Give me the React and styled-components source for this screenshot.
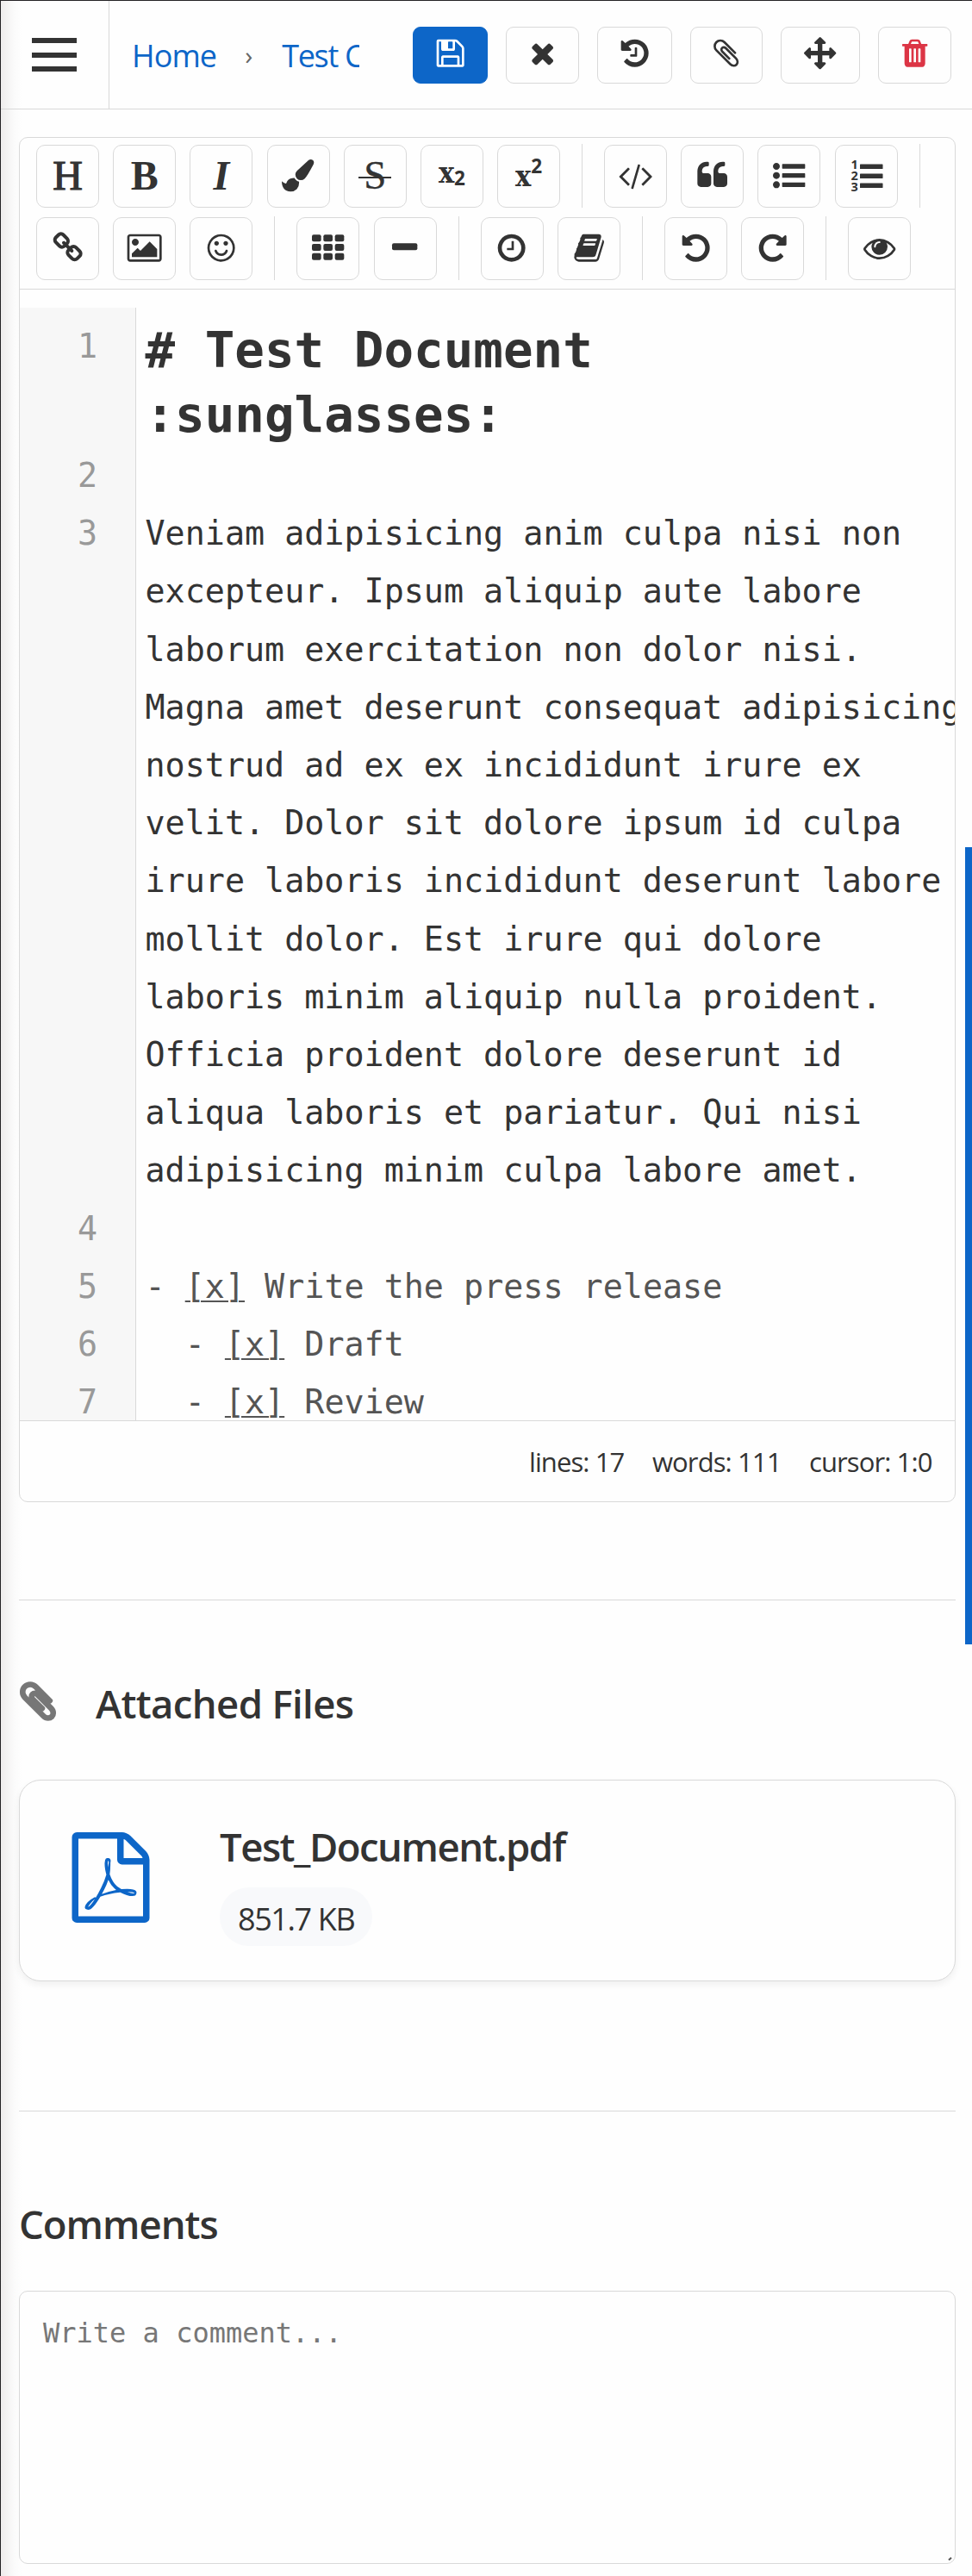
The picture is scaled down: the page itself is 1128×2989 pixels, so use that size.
import React from 'react';
import styled, { createGlobalStyle } from 'styled-components';

const GlobalStyle = createGlobalStyle`
  *, *::before, *::after { box-sizing: border-box; }
  html, body { margin: 0; background: #fefefe; }
  body { font-family: "Open Sans", "Noto Sans", sans-serif; color: #333; overflow: hidden; }
`;

const line = '#d9d9d9';
const blue = '#0d66c8';
const ink = '#333333';
const mono = '"DejaVu Sans Mono", "Liberation Mono", monospace';

const Page = styled.div`
  position: relative;
  width: 1128px;
  height: 2989px;
  overflow: hidden;
  background: linear-gradient(to right, #eeecec 0, #f5f4f4 8px, #fbfbfb 16px, #fefefe 24px);
  border-top: 1px solid #252326;
  border-left: 1px solid #252326;
`;

const Header = styled.header`
  display: flex;
  height: 126px;
  border-bottom: 1px solid ${line};
`;

const MenuButton = styled.button`
  display: flex;
  flex-direction: column;
  justify-content: space-between;
  width: 126px;
  height: 125px;
  padding: 43px 37px 43px 36px;
  border: 0;
  border-right: 1px solid ${line};
  background: none;
`;

const MenuBar = styled.span`
  height: 6px;
  background: ${ink};
`;

const Breadcrumbs = styled.nav`
  display: flex;
  align-items: center;
  width: 290px;
  padding: 2px 0 0 26px;
  overflow: hidden;
  white-space: nowrap;
  font-size: 36px;
`;

const Crumb = styled.a`
  flex: none;
  color: ${blue};
  letter-spacing: ${(p) => p.$track}px;
`;

const CrumbArrow = styled.span`
  flex: none;
  width: 76px;
  padding: 0 0 2px 33px;
  color: #666;
  font-size: 30px;
`;

const Actions = styled.div`
  display: flex;
  gap: 21px;
  padding: 30px 0 0 62px;
`;

const ActionButton = styled.button`
  display: flex;
  justify-content: center;
  width: ${(p) => p.$width}px;
  height: 66px;
  padding: 11px 0 0;
  border: 1px solid ${(p) => (p.$primary ? blue : line)};
  border-radius: 9px;
  background: ${(p) => (p.$primary ? blue : '#fefefe')};
  color: ${(p) => (p.$primary ? '#fff' : p.$danger ? '#dc3545' : ink)};
`;

const Icon = styled.svg`
  display: block;
  flex: none;
  fill: currentColor;
  overflow: visible;
`;

const Main = styled.main`
  padding: 32px 19px 0 21px;
`;

const Editor = styled.section`
  height: 1584px;
  border: 1px solid ${line};
  border-radius: 10px;
  overflow: hidden;
  background: #fefefe;
`;

const Toolbar = styled.div`
  display: flex;
  flex-direction: column;
  gap: 11px;
  height: 176px;
  padding: 8px 0 0 19px;
  border-bottom: 1px solid ${line};
`;

const ToolRow = styled.div`
  display: flex;
`;

const ToolButton = styled.button`
  display: flex;
  align-items: center;
  justify-content: center;
  width: 73px;
  height: 73px;
  margin-right: 16.2px;
  padding: 0 0 2px;
  border: 1px solid ${line};
  border-radius: 10px;
  background: #fefefe;
  color: ${ink};
`;

const ToolDivider = styled.span`
  width: 1px;
  height: 74px;
  margin: -1px 25px 0 8.8px;
  background: ${line};
`;

const Glyph = styled.span`
  font-family: "Liberation Serif", serif;
  font-size: ${(p) => p.$size || 48}px;
  line-height: 1;
  font-weight: ${(p) => p.$weight || 700};
  font-style: ${(p) => (p.$italic ? 'italic' : 'normal')};
  -webkit-text-stroke: ${(p) => p.$stroke || 0}px ${ink};
`;

const Struck = styled(Glyph)`
  position: relative;
  &::after {
    content: '';
    position: absolute;
    left: -6px;
    right: -6px;
    top: 25px;
    height: 2px;
    background: ${ink};
  }
`;

const ScriptGlyph = styled.span`
  display: flex;
  font: 700 34px/36px "DejaVu Serif Condensed", "DejaVu Serif", serif;
`;

const ScriptDigit = styled.span`
  font: 700 22.5px/36px "Open Sans", sans-serif;
  margin-top: ${(p) => (p.$raised ? '-11px' : '7px')};
`;

const CodeArea = styled.div`
  display: grid;
  grid-template-columns: 135px 1fr;
  height: 1312px;
  padding-top: 21px;
  overflow: hidden;
  font: 38.36px/67.2px ${mono};
`;

const Gutter = styled.div`
  padding: 11px 44px 0 0;
  border-right: 1px solid ${line};
  background: #f7f7f7;
  color: #999;
  text-align: right;
`;

const LineNumber = styled.div`
  height: ${(p) => p.$height}px;
`;

const Code = styled.div`
  padding: 10px 0 0 10.5px;
  overflow: hidden;
  white-space: pre;
`;

const CodeHeading = styled.div`
  height: 151px;
  padding-top: 2px;
  font-size: 57.5px;
  font-weight: 700;
  line-height: 75px;
`;

const CodeLine = styled.div`
  height: 67.2px;
  color: ${(p) => (p.$muted ? '#555' : ink)};
`;

const Check = styled.span`
  text-decoration: underline;
  text-decoration-thickness: 2px;
  text-underline-offset: 3px;
`;

const StatusBar = styled.div`
  display: flex;
  justify-content: flex-end;
  gap: 33px;
  height: 96px;
  padding: 25px 27px 0 0;
  border-top: 1px solid ${line};
  font-size: 31px;
  line-height: 44px;
`;

const StatusItem = styled.span`
  width: ${(p) => p.$width}px;
  white-space: nowrap;
  letter-spacing: -0.9px;
`;

const Rule = styled.hr`
  height: 1px;
  margin: ${(p) => p.$top}px 0 0;
  border: 0;
  background: ${line};
`;

const SectionHeading = styled.h2`
  display: flex;
  margin: 0;
  height: 64px;
  font-size: 45.5px;
  font-weight: 600;
  line-height: 64px;
  white-space: nowrap;
  letter-spacing: ${(p) => p.$track}px;
`;

const FileName = styled(SectionHeading)`
  height: 56px;
  line-height: 49px;
`;

const ClipSlot = styled.span`
  width: 92px;
  margin-left: -3px;
  padding: 5px 0 0 0;
  color: #777;
`;

const FileCard = styled.article`
  display: flex;
  height: 234px;
  padding: 52px 0 0 53px;
  border: 1px solid ${line};
  border-radius: 25px;
  background: #fefefe;
  box-shadow: 0 4px 9px rgba(0, 0, 0, 0.06);
`;

const FileIcon = styled.div`
  padding-top: 8px;
  color: ${blue};
`;

const FileInfo = styled.div`
  padding: 0 0 0 74px;
`;

const SizeBadge = styled.span`
  display: block;
  width: 177px;
  height: 68px;
  margin-top: 16px;
  padding-left: 21px;
  border-radius: 34px;
  background: #f8f9fb;
  font-size: 36px;
  line-height: 73px;
  white-space: nowrap;
  letter-spacing: -1.4px;
`;

const CommentBox = styled.div`
  position: relative;
  height: 317px;
  padding: 26px 27px;
  border: 1px solid ${line};
  border-radius: 10px;
  background: #fefefe;
  color: #777;
  font: 32px/44px ${mono};
`;

const Resizer = styled.svg`
  position: absolute;
  right: 3px;
  bottom: 3px;
`;

const AttachSection = styled.section`
  padding-top: 87px;
`;
const CardSlot = styled.div`
  padding-top: 57px;
`;
const CommentSection = styled.section`
  padding-top: 98px;
`;
const CommentSlot = styled.div`
  padding-top: 46px;
`;

const paths = {
  save: 'M512 1536h768v-384h-768v384zm896 0h128v-896q0-14-10-38.5t-20-34.5l-281-281q-10-10-34-20t-39-10v416q0 40-28 68t-68 28h-576q-40 0-68-28t-28-68v-416h-128v1280h128v-416q0-40 28-68t68-28h832q40 0 68 28t28 68v416zm-384-928v-320q0-13-9.5-22.5t-22.5-9.5h-192q-13 0-22.5 9.5t-9.5 22.5v320q0 13 9.5 22.5t22.5 9.5h192q13 0 22.5-9.5t9.5-22.5zm640 32v928q0 40-28 68t-68 28h-1344q-40 0-68-28t-28-68v-1344q0-40 28-68t68-28h928q40 0 88 20t76 48l280 280q28 28 48 76t20 88z',
  close: 'M1490 1322q0 40-28 68l-136 136q-28 28-68 28t-68-28l-294-294-294 294q-28 28-68 28t-68-28l-136-136q-28-28-28-68t28-68l294-294-294-294q-28-28-28-68t28-68l136-136q28-28 68-28t68 28l294 294 294-294q28-28 68-28t68 28l136 136q28 28 28 68t-28 68l-294 294 294 294q28 28 28 68z',
  history: 'M1664 896q0 156-61 298t-164 245-245 164-298 61q-172 0-327-72.5t-264-204.5q-7-10-6.5-22.5t8.5-20.5l137-138q10-9 25-9 16 2 23 12 73 95 179 147t225 52q104 0 198.5-40.5t163.5-109.5 109.5-163.5 40.5-198.5-40.5-198.5-109.5-163.5-163.5-109.5-198.5-40.5q-98 0-188 35.5t-160 101.5l137 138q31 30 14 69-17 40-59 40h-448q-26 0-45-19t-19-45v-448q0-42 40-59 39-17 69 14l130 129q107-101 244.5-156.5t284.5-55.5q156 0 298 61t245 164 164 245 61 298zm-640-288v448q0 14-9 23t-23 9h-320q-14 0-23-9t-9-23v-64q0-14 9-23t23-9h224v-352q0-14 9-23t23-9h64q14 0 23 9t9 23z',
  undo: 'M1664 896q0 156-61 298t-164 245-245 164-298 61q-172 0-327-72.5t-264-204.5q-7-10-6.5-22.5t8.5-20.5l137-138q10-9 25-9 16 2 23 12 73 95 179 147t225 52q104 0 198.5-40.5t163.5-109.5 109.5-163.5 40.5-198.5-40.5-198.5-109.5-163.5-163.5-109.5-198.5-40.5q-98 0-188 35.5t-160 101.5l137 138q31 30 14 69-17 40-59 40h-448q-26 0-45-19t-19-45v-448q0-42 40-59 39-17 69 14l130 129q107-101 244.5-156.5t284.5-55.5q156 0 298 61t245 164 164 245 61 298z',
  clip: 'M1596 1385q0 117-79 196t-196 79q-135 0-235-100l-777-776q-113-115-113-271 0-159 110-270t269-111q158 0 273 113l605 606q10 10 10 22 0 16-30.5 46.5t-46.5 30.5q-13 0-23-10l-606-607q-79-77-181-77-106 0-179 75t-73 181q0 105 76 181l776 777q63 63 145 63 64 0 106-42t42-106q0-82-63-145l-581-581q-26-24-60-24-29 0-48 19t-19 48q0 32 25 59l410 410q10 10 10 22 0 16-31 47t-47 31q-12 0-22-10l-410-410q-63-61-63-149 0-82 57-139t139-57q88 0 149 63l581 581q100 98 100 235z',
  move: 'M1792 896q0 26-19 45l-256 256q-19 19-45 19t-45-19-19-45v-128h-384v384h128q26 0 45 19t19 45-19 45l-256 256q-19 19-45 19t-45-19l-256-256q-19-19-19-45t19-45 45-19h128v-384h-384v128q0 26-19 45t-45 19-45-19l-256-256q-19-19-19-45t19-45l256-256q19-19 45-19t45 19 19 45v128h384v-384h-128q-26 0-45-19t-19-45 19-45l256-256q19-19 45-19t45 19l256 256q19 19 19 45t-19 45-45 19h-128v384h384v-128q0-26 19-45t45-19 45 19l256 256q19 19 19 45z',
  trash: 'M704 1376v-704q0-14-9-23t-23-9h-64q-14 0-23 9t-9 23v704q0 14 9 23t23 9h64q14 0 23-9t9-23zm256 0v-704q0-14-9-23t-23-9h-64q-14 0-23 9t-9 23v704q0 14 9 23t23 9h64q14 0 23-9t9-23zm256 0v-704q0-14-9-23t-23-9h-64q-14 0-23 9t-9 23v704q0 14 9 23t23 9h64q14 0 23-9t9-23zm-544-992h448l-48-117q-7-9-17-11h-317q-10 2-17 11zm928 32v64q0 14-9 23t-23 9h-96v948q0 83-47 143.5t-113 60.5h-832q-66 0-113-58.5t-47-141.5v-952h-96q-14 0-23-9t-9-23v-64q0-14 9-23t23-9h309l70-167q15-37 54-63t79-26h320q40 0 79 26t54 63l70 167h309q14 0 23 9t9 23z',
  brush: 'M1615 0q70 0 122.5 46.5t52.5 116.5q0 63-45 151-332 629-465 752-97 91-218 91-126 0-216.5-92.5t-90.5-219.5q0-128 92-212l638-579q59-54 130-54zm-909 1034q39 76 106.5 130t150.5 76l1 71q4 213-129.5 347t-348.5 134q-123 0-218-46.5t-152.5-127.5-86.5-183-29-220q7 5 41 30t62 44.5 59 36.5 46 17q41 0 55-37 25-66 57.5-112.5t69.5-76 88-47.5 103-25.5 125-10.5z',
  code: 'M553 1399l-50 50q-10 10-23 10t-23-10l-466-466q-10-10-10-23t10-23l466-466q10-10 23-10t23 10l50 50q10 10 10 23t-10 23l-393 393 393 393q10 10 10 23t-10 23zm591-1067l-373 1291q-4 13-15.5 19.5t-23.5 2.5l-62-17q-13-4-19.5-15.5t-2.5-24.5l373-1291q4-13 15.5-19.5t23.5-2.5l62 17q13 4 19.5 15.5t2.5 24.5zm657 651l-466 466q-10 10-23 10t-23-10l-50-50q-10-10-10-23t10-23l393-393-393-393q-10-10-10-23t10-23l50-50q10-10 23-10t23 10l466 466q10 10 10 23t-10 23z',
  quote: 'M832 960v384q0 80-56 136t-136 56h-384q-80 0-136-56t-56-136v-704q0-104 40.5-198.5t109.5-163.5 163.5-109.5 198.5-40.5h64q26 0 45 19t19 45v128q0 26-19 45t-45 19h-64q-106 0-181 75t-75 181v32q0 40 28 68t68 28h224q80 0 136 56t56 136zm896 0v384q0 80-56 136t-136 56h-384q-80 0-136-56t-56-136v-704q0-104 40.5-198.5t109.5-163.5 163.5-109.5 198.5-40.5h64q26 0 45 19t19 45v128q0 26-19 45t-45 19h-64q-106 0-181 75t-75 181v32q0 40 28 68t68 28h224q80 0 136 56t56 136z',
  bullets: 'M384 1408q0 80-56 136t-136 56-136-56-56-136 56-136 136-56 136 56 56 136zm0-512q0 80-56 136t-136 56-136-56-56-136 56-136 136-56 136 56 56 136zm1408 416v192q0 13-9.5 22.5t-22.5 9.5h-1216q-13 0-22.5-9.5t-9.5-22.5v-192q0-13 9.5-22.5t22.5-9.5h1216q13 0 22.5 9.5t9.5 22.5zm-1408-928q0 80-56 136t-136 56-136-56-56-136 56-136 136-56 136 56 56 136zm1408 416v192q0 13-9.5 22.5t-22.5 9.5h-1216q-13 0-22.5-9.5t-9.5-22.5v-192q0-13 9.5-22.5t22.5-9.5h1216q13 0 22.5 9.5t9.5 22.5zm0-512v192q0 13-9.5 22.5t-22.5 9.5h-1216q-13 0-22.5-9.5t-9.5-22.5v-192q0-13 9.5-22.5t22.5-9.5h1216q13 0 22.5 9.5t9.5 22.5z',
  link: 'M1520 1216q0-40-28-68l-208-208q-28-28-68-28-42 0-72 32 3 3 19 18.5t21.5 21.5 15 19 13 25.5 3.5 27.5q0 40-28 68t-68 28q-15 0-27.5-3.5t-25.5-13-19-15-21.5-21.5-18.5-19q-33 31-33 73 0 40 28 68l206 207q27 27 68 27 40 0 68-26l147-146q28-28 28-67zm-703-705q0-40-28-68l-206-207q-28-28-68-28-39 0-68 27l-147 146q-28 28-28 67 0 40 28 68l208 208q27 27 68 27 42 0 72-31-3-3-19-18.5t-21.5-21.5-15-19-13-25.5-3.5-27.5q0-40 28-68t68-28q15 0 27.5 3.5t25.5 13 19 15 21.5 21.5 18.5 19q33-31 33-73zm895 705q0 120-85 203l-147 146q-83 83-203 83-121 0-204-85l-206-207q-83-83-83-203 0-123 88-209l-88-88q-86 88-208 88-120 0-204-84l-208-208q-84-84-84-204t85-203l147-146q83-83 203-83 121 0 204 85l206 207q83 83 83 203 0 123-88 209l88 88q86-88 208-88 120 0 204 84l208 208q84 84 84 204z',
  image: 'M576 576q0 80-56 136t-136 56-136-56-56-136 56-136 136-56 136 56 56 136zm1024 384v448h-1408v-192l320-320 160 160 512-512zm96-704h-1600q-13 0-22.5 9.5t-9.5 22.5v1216q0 13 9.5 22.5t22.5 9.5h1600q13 0 22.5-9.5t9.5-22.5v-1216q0-13-9.5-22.5t-22.5-9.5zm160 32v1216q0 66-47 113t-113 47h-1600q-66 0-113-47t-47-113v-1216q0-66 47-113t113-47h1600q66 0 113 47t47 113z',
  smile: 'M1262 1075q-37 121-138 195t-228 74-228-74-138-195q-8-25 4-48.5t38-31.5q25-8 48.5 4t31.5 38q25 80 92.5 129.5t151.5 49.5 151.5-49.5 92.5-129.5q8-26 32-38t49-4 37 31.5 4 48.5zm-494-435q0 53-37.5 90.5t-90.5 37.5-90.5-37.5-37.5-90.5 37.5-90.5 90.5-37.5 90.5 37.5 37.5 90.5zm512 0q0 53-37.5 90.5t-90.5 37.5-90.5-37.5-37.5-90.5 37.5-90.5 90.5-37.5 90.5 37.5 37.5 90.5zm256 256q0-130-51-248.5t-136.5-204-204-136.5-248.5-51-248.5 51-204 136.5-136.5 204-51 248.5 51 248.5 136.5 204 204 136.5 248.5 51 248.5-51 204-136.5 136.5-204 51-248.5zm128 0q0 209-103 385.5t-279.5 279.5-385.5 103-385.5-103-279.5-279.5-103-385.5 103-385.5 279.5-279.5 385.5-103 385.5 103 279.5 279.5 103 385.5z',
  clock: 'M1024 544v448q0 14-9 23t-23 9h-320q-14 0-23-9t-9-23v-64q0-14 9-23t23-9h224v-352q0-14 9-23t23-9h64q14 0 23 9t9 23zm416 352q0-148-73-273t-198-198-273-73-273 73-198 198-73 273 73 273 198 198 273 73 273-73 198-198 73-273zm224 0q0 209-103 385.5t-279.5 279.5-385.5 103-385.5-103-279.5-279.5-103-385.5 103-385.5 279.5-279.5 385.5-103 385.5 103 279.5 279.5 103 385.5z',
  book: 'M1703 478q40 57 18 129l-275 906q-19 64-76.5 107.5t-122.5 43.5h-923q-77 0-148.5-53.5t-99.5-131.5q-24-67-2-127 0-4 3-27t4-37q1-8-3-21.5t-3-19.5q2-11 8-21t16.5-23.5 16.5-23.5q23-38 45-91.5t30-91.5q3-10 .5-30t-.5-28q3-11 17-28t17-23q21-36 42-92t25-90q1-9-2.5-32t.5-28q4-13 22-30.5t22-22.5q19-26 42.5-84.5t27.5-96.5q1-8-3-25.5t-2-26.5q2-8 9-18t18-23 17-21q8-12 16.5-30.5t15-35 16-36 19.5-32 26.5-23.5 36-11.5 47.5 5.5l-1 3q38-9 51-9h761q74 0 114 56t18 130l-274 906q-36 119-71.5 153.5t-128.5 34.5h-869q-27 0-38 15-11 16-1 43 24 70 144 70h923q29 0 56-15.5t35-41.5l300-987q7-22 5-57 38 15 59 43zm-1064 2q-4 13 2 22.5t20 9.5h608q13 0 25.5-9.5t16.5-22.5l21-64q4-13-2-22.5t-20-9.5h-608q-13 0-25.5 9.5t-16.5 22.5zm-83 256q-4 13 2 22.5t20 9.5h608q13 0 25.5-9.5t16.5-22.5l21-64q4-13-2-22.5t-20-9.5h-608q-13 0-25.5 9.5t-16.5 22.5z',
  eye: 'M1664 960q-152-236-381-353 61 104 61 225 0 185-131.5 316.5t-316.5 131.5-316.5-131.5-131.5-316.5q0-121 61-225-229 117-381 353 133 205 333.5 326.5t434.5 121.5 434.5-121.5 333.5-326.5zm-720-384q0-20-14-34t-34-14q-125 0-214.5 89.5t-89.5 214.5q0 20 14 34t34 14 34-14 14-34q0-86 61-147t147-61q20 0 34-14t14-34zm848 384q0 34-20 69-140 230-376.5 368.5t-499.5 138.5-499.5-139-376.5-368q-20-35-20-69t20-69q140-229 376.5-368t499.5-139 499.5 139 376.5 368q20 35 20 69z',
  pdf: 'M1596 380q28 28 48 76t20 88v1152q0 40-28 68t-68 28h-1344q-40 0-68-28t-28-68v-1600q0-40 28-68t68-28h896q40 0 88 20t76 48zm-444-244v376h376q-10-29-22-41l-313-313q-12-12-41-22zm384 1528v-1024h-416q-40 0-68-28t-28-68v-416h-768v1536h1280zm-514-593q33 26 84 56 59-7 117-7 147 0 177 49 16 22 2 52 0 1-1 2l-2 2v1q-6 38-71 38-48 0-115-20t-130-53q-221 24-392 83-153 262-242 262-15 0-28-7l-24-12q-1-1-6-5-10-10-6-36 9-40 56-91.5t132-96.5q14-9 23 6 2 2 2 4 52-85 107-197 68-136 104-262-24-82-30.5-159.5t6.5-127.5q11-40 42-40h22q23 0 35 15 18 21 9 68-2 6-4 8 1 3 1 8v30q-2 123-14 192 55 164 146 238zm-576 411q52-24 137-158-51 40-87.5 84t-49.5 74zm398-920q-15 42-2 132 1-7 7-44 0-3 7-43 1-4 4-8-1-1-1-2t-1-2q-1-22-13-36 0 1-1 2v2zm-124 661q135-54 284-81-2-1-13-9.5t-16-13.5q-76-67-127-176-27 86-83 197-30 56-45 83zm646-16q-24-24-140-24 76 28 124 28 14 0 18-1 0-1-2-3z',
};

const Fa = ({ name, size = 37.33, flip, bold }) => (
  <Icon width={size} height={size} viewBox="0 0 1792 1792">
    <path
      d={paths[name]}
      transform={flip ? 'translate(1792 0) scale(-1 1)' : undefined}
      stroke={bold ? 'currentColor' : 'none'}
      strokeWidth={bold || 0}
    />
  </Icon>
);

const GridIcon = () => (
  <Icon width="37.33" height="37.33" viewBox="0 0 1792 1792">
    {[128, 640, 1152].map((y) =>
      [0, 640, 1280].map((x) => (
        <rect key={`${x}-${y}`} x={x} y={y + 32} width="512" height="384" rx="96" />
      ))
    )}
  </Icon>
);

const MinusIcon = () => (
  <Icon width="37.33" height="37.33" viewBox="0 0 1792 1792">
    <rect x="192" y="640" width="1408" height="384" rx="96" />
  </Icon>
);

const NumberedIcon = () => (
  <Icon width="37.33" height="42" viewBox="0 0 37.33 42">
    {[7, 18, 29].map((y) => (
      <rect key={y} x="11" y={y + 0.5} width="26.5" height="5.5" rx="0.6" />
    ))}
    {['1', '2', '3'].map((n, i) => (
      <text key={n} x="0.5" y={13 + i * 13} fontFamily="Open Sans" fontWeight="700" fontSize="14.5">
        {n}
      </text>
    ))}
  </Icon>
);

const Tool = ({ children }) => <ToolButton type="button">{children}</ToolButton>;

const prose = [
  'Veniam adipisicing anim culpa nisi non',
  'excepteur. Ipsum aliquip aute labore',
  'laborum exercitation non dolor nisi.',
  'Magna amet deserunt consequat adipisicing',
  'nostrud ad ex ex incididunt irure ex',
  'velit. Dolor sit dolore ipsum id culpa',
  'irure laboris incididunt deserunt labore',
  'mollit dolor. Est irure qui dolore',
  'laboris minim aliquip nulla proident.',
  'Officia proident dolore deserunt id',
  'aliqua laboris et pariatur. Qui nisi',
  'adipisicing minim culpa labore amet.',
];

const tasks = [
  ['- ', ' Write the press release'],
  ['  - ', ' Draft'],
  ['  - ', ' Review'],
];

const numbers = [150, 67.2, 67.2 * 12, 67.2, 67.2, 67.2, 67.2];

const actions = [
  { name: 'save', width: 87, primary: true },
  { name: 'close', width: 85 },
  { name: 'history', width: 87 },
  { name: 'clip', width: 84 },
  { name: 'move', width: 92 },
  { name: 'trash', width: 85, danger: true },
];

const ScrollThumb = styled.div`
  position: absolute;
  right: 0;
  top: 982px;
  width: 8px;
  height: 925px;
  background: ${blue};
`;

export default function App() {
  return (
    <Page>
      <GlobalStyle />
      <Header>
        <MenuButton type="button">
          <MenuBar />
          <MenuBar />
          <MenuBar />
        </MenuButton>
        <Breadcrumbs>
          <Crumb $track={-0.9}>Home</Crumb>
          <CrumbArrow>›</CrumbArrow>
          <Crumb $track={-1.3}>Test C</Crumb>
        </Breadcrumbs>
        <Actions>
          {actions.map((a) => (
            <ActionButton key={a.name} type="button" $width={a.width} $primary={a.primary} $danger={a.danger}>
              <Fa name={a.name} />
            </ActionButton>
          ))}
        </Actions>
      </Header>
      <Main>
        <Editor>
          <Toolbar>
            <ToolRow>
              <Tool><Glyph $size={48} $weight={400} $stroke={1.2}>H</Glyph></Tool>
              <Tool><Glyph $size={48}>B</Glyph></Tool>
              <Tool><Glyph $size={48} $italic>I</Glyph></Tool>
              <Tool><Fa name="brush" /></Tool>
              <Tool><Struck $size={47} $weight={400} $stroke={0.4}>S</Struck></Tool>
              <Tool><ScriptGlyph>x<ScriptDigit>2</ScriptDigit></ScriptGlyph></Tool>
              <Tool><ScriptGlyph>x<ScriptDigit $raised>2</ScriptDigit></ScriptGlyph></Tool>
              <ToolDivider />
              <Tool><Fa name="code" /></Tool>
              <Tool><Fa name="quote" /></Tool>
              <Tool><Fa name="bullets" /></Tool>
              <Tool><NumberedIcon /></Tool>
              <ToolDivider />
            </ToolRow>
            <ToolRow>
              <Tool><Fa name="link" /></Tool>
              <Tool><Fa name="image" /></Tool>
              <Tool><Fa name="smile" /></Tool>
              <ToolDivider />
              <Tool><GridIcon /></Tool>
              <Tool><MinusIcon /></Tool>
              <ToolDivider />
              <Tool><Fa name="clock" /></Tool>
              <Tool><Fa name="book" /></Tool>
              <ToolDivider />
              <Tool><Fa name="undo" /></Tool>
              <Tool><Fa name="undo" flip /></Tool>
              <ToolDivider />
              <Tool><Fa name="eye" /></Tool>
            </ToolRow>
          </Toolbar>
          <CodeArea>
            <Gutter>
              {numbers.map((h, i) => (
                <LineNumber key={i} $height={h}>{i + 1}</LineNumber>
              ))}
            </Gutter>
            <Code>
              <CodeHeading>{'# Test Document\n:sunglasses:'}</CodeHeading>
              <CodeLine />
              {prose.map((t) => <CodeLine key={t}>{t}</CodeLine>)}
              <CodeLine />
              {tasks.map(([lead, text]) => (
                <CodeLine key={text} $muted>{lead}<Check>[x]</Check>{text}</CodeLine>
              ))}
            </Code>
          </CodeArea>
          <StatusBar>
            <StatusItem $width={110}>lines: 17</StatusItem>
            <StatusItem $width={149}>words: 111</StatusItem>
            <StatusItem $width={142}>cursor: 1:0</StatusItem>
          </StatusBar>
        </Editor>
        <Rule $top={113} />
        <AttachSection>
          <SectionHeading $track={-0.65}>
            <ClipSlot><Fa name="clip" size={50} bold={110} /></ClipSlot>
            Attached Files
          </SectionHeading>
          <CardSlot>
            <FileCard>
              <FileIcon><Fa name="pdf" size={105} /></FileIcon>
              <FileInfo>
                <FileName as="h3" $track={-1.5}>Test_Document.pdf</FileName>
                <SizeBadge>851.7 KB</SizeBadge>
              </FileInfo>
            </FileCard>
          </CardSlot>
        </AttachSection>
        <Rule $top={150} />
        <CommentSection>
          <SectionHeading $track={-1}>Comments</SectionHeading>
          <CommentSlot>
            <CommentBox>
              Write a comment...
              <Resizer width="5" height="4" viewBox="0 0 5 4">
                <path d="M1 3.5 4 .8" stroke="#555" strokeWidth="2" />
              </Resizer>
            </CommentBox>
          </CommentSlot>
        </CommentSection>
      </Main>
      <ScrollThumb />
    </Page>
  );
}
